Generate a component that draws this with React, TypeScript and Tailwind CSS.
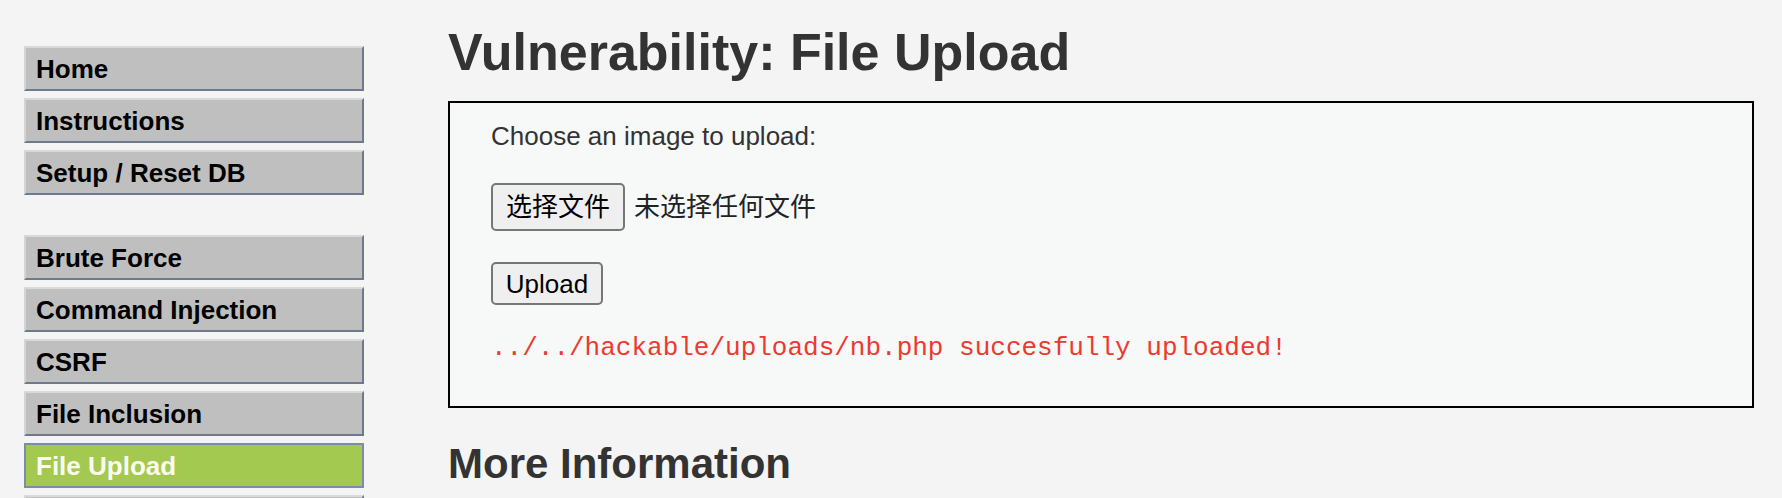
import React from "react";

const group1 = ["Home", "Instructions", "Setup / Reset DB"];
const group2 = ["Brute Force", "Command Injection", "CSRF", "File Inclusion", "File Upload"];

function MenuItem({ label, selected }: { label: string; selected?: boolean }) {
  if (selected) {
    return (
      <li>
        <a className="flex h-[45px] items-center border-2 border-[#7d8cab] bg-[#a4c951] pl-[10px] text-[26px] font-bold text-[#fbfbf2]">
          {label}
        </a>
      </li>
    );
  }
  return (
    <li>
      <a className="flex h-[45px] items-center border-2 border-t-[#d9d9d9] border-l-[#d4d4d4] border-r-[#6e7a8c] border-b-[#6e7a8c] bg-[#bfbfbf] pl-[10px] text-[26px] font-bold text-black">
        {label}
      </a>
    </li>
  );
}

export default function App() {
  return (
    <div className="flex h-[498px] w-[1782px] overflow-hidden bg-[#f4f4f4] font-['Liberation_Sans','Noto_Sans_CJK_SC',sans-serif] leading-[30px]">
      <div className="ml-[24px] mt-[46px] w-[340px] shrink-0">
        <ul className="flex flex-col gap-[7px]">
          {group1.map((g) => (
            <MenuItem key={g} label={g} />
          ))}
        </ul>
        <ul className="mt-[40px] flex flex-col gap-[7px]">
          {group2.map((g) => (
            <MenuItem key={g} label={g} selected={g === "File Upload"} />
          ))}
          <li aria-hidden="true">
            <div className="h-[45px] border-2 border-t-[#d9d9d9] border-l-[#d4d4d4] border-r-[#6e7a8c] border-b-[#6e7a8c] bg-[#bfbfbf]" />
          </li>
        </ul>
      </div>

      <div className="ml-[84px] mr-[28px] flex-1">
        <h1 className="mt-[22px] text-[52px] font-bold leading-[60px] text-[#333333]">
          Vulnerability: File Upload
        </h1>

        <div className="mt-[19px] border-2 border-black bg-[#f7f8f8] pb-[43px] pl-[41px] pt-[18px] text-[#333333]">
          <p className="text-[26px] leading-[30px]">Choose an image to upload:</p>

          <div className="mt-[32px] flex items-center">
            <button className="flex h-[48px] w-[134px] items-center justify-center rounded-[5px] border-2 border-[#767676] bg-[#efefef] text-[26px] text-black font-['Liberation_Sans','Noto_Sans_CJK_SC',sans-serif]">
              选择文件
            </button>
            <span className="ml-[9px] text-[26px] text-[#222222] font-['Liberation_Sans','Noto_Sans_CJK_SC',sans-serif]">
              未选择任何文件
            </span>
          </div>

          <button className="mt-[31px] flex h-[43px] w-[112px] items-center justify-center rounded-[5px] border-2 border-[#767676] bg-[#efefef] text-[26px] text-black">
            Upload
          </button>

          <pre className="mt-[28px] font-['Liberation_Mono','Courier_New',monospace] text-[26px] leading-[30px] text-[#ec3a2e]">
            ../../hackable/uploads/nb.php succesfully uploaded!
          </pre>
        </div>

        <h2 className="mt-[32px] text-[42px] font-bold leading-[48px] text-[#333333]">
          More Information
        </h2>
      </div>
    </div>
  );
}
